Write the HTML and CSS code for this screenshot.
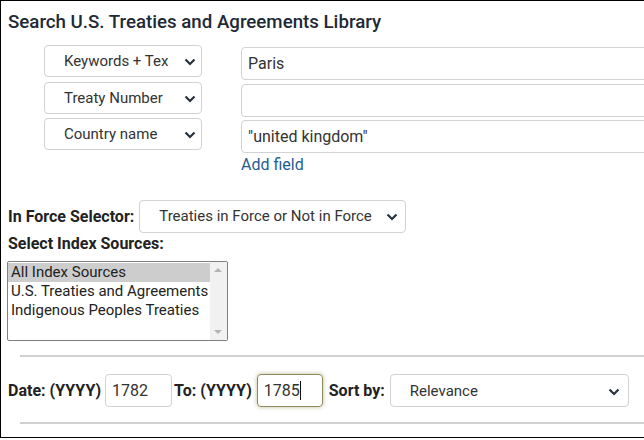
FILE: index.html
```html
<!DOCTYPE html>
<html lang="en">
<head>
    <meta charset="UTF-8">
    <meta name="viewport" content="width=device-width, initial-scale=1.0">
    <title>Search U.S. Treaties and Agreements Library</title>
    <link rel="stylesheet" href="styles.css">
</head>
<body>
    <div class="frame">
        <h1>Search U.S. Treaties and Agreements Library</h1>

        <!-- Search fields -->
        <div class="fields">
            <div class="field-row">
                <div class="select-wrap field-select">
                    <select><option>Keywords + Tex</option></select>
                    <svg class="chevron" viewBox="0 0 12 8"><path d="M1.5 1.5 L6 6 L10.5 1.5"/></svg>
                </div>
                <input class="field-input" type="text" value="Paris">
            </div>
            <div class="field-row">
                <div class="select-wrap field-select">
                    <select><option>Treaty Number</option></select>
                    <svg class="chevron" viewBox="0 0 12 8"><path d="M1.5 1.5 L6 6 L10.5 1.5"/></svg>
                </div>
                <input class="field-input" type="text" value="">
            </div>
            <div class="field-row">
                <div class="select-wrap field-select">
                    <select><option>Country name</option></select>
                    <svg class="chevron" viewBox="0 0 12 8"><path d="M1.5 1.5 L6 6 L10.5 1.5"/></svg>
                </div>
                <input class="field-input" type="text" value="&quot;united kingdom&quot;">
            </div>
            <a href="#" class="add-field">Add field</a>
        </div>

        <!-- In force -->
        <div class="force-row">
            <label class="label">In Force Selector:</label>
            <div class="select-wrap force-select">
                <select><option>Treaties in Force or Not in Force</option></select>
                <svg class="chevron" viewBox="0 0 12 8"><path d="M1.5 1.5 L6 6 L10.5 1.5"/></svg>
            </div>
        </div>

        <label class="label sources-label">Select Index Sources:</label>
        <div class="listbox">
            <ul class="options">
                <li class="selected">All Index Sources</li>
                <li>U.S. Treaties and Agreements</li>
                <li>Indigenous Peoples Treaties</li>
            </ul>
            <div class="scrollbar">
                <span class="arrow-up"></span>
                <span class="arrow-down"></span>
            </div>
        </div>

        <hr>

        <!-- Dates and sort -->
        <div class="date-row">
            <label class="label">Date: (YYYY)</label>
            <input class="year from-year" type="text" value="1782">
            <label class="label">To: (YYYY)</label>
            <div class="year to-year">1785<span class="caret"></span></div>
            <label class="label">Sort by:</label>
            <div class="select-wrap sort-select">
                <select><option>Relevance</option></select>
                <svg class="chevron" viewBox="0 0 12 8"><path d="M1.5 1.5 L6 6 L10.5 1.5"/></svg>
            </div>
        </div>

        <hr class="last">
    </div>
</body>
</html>
```

FILE: styles.css
```css
body {
    margin: 0;
    font-family: Roboto, "Liberation Sans", Arial, sans-serif;
    color: #333;
    background: white;
}

.frame {
    width: 640px;
    height: 436px;
    border: 1px solid black;
    padding: 0 0 0 7px;
    box-sizing: content-box;
    overflow: hidden;
    position: relative;
}

h1 {
    font-size: 18.7px;
    font-weight: 500;
    color: #1e2a36;
    margin: 0;
    padding: 11px 0 0 0;
    line-height: 20px;
    white-space: nowrap;
}

/* search field rows */
.fields {
    margin: 15px 0 0 36px;
}

.field-row {
    display: flex;
    align-items: flex-start;
    height: 33px;
    margin-bottom: 3.5px;
}

.select-wrap {
    position: relative;
}

.select-wrap select {
    appearance: none;
    -webkit-appearance: none;
    width: 100%;
    height: 100%;
    border: 1px solid #d2d2d2;
    border-radius: 4px;
    background: white;
    font-family: inherit;
    font-size: 15px;
    color: #333;
    padding: 0 0 0 19px;
    margin: 0;
}

.chevron {
    position: absolute;
    width: 12px;
    height: 8px;
    top: 50%;
    right: 8px;
    margin-top: -3px;
    fill: none;
    stroke: #28323c;
    stroke-width: 2.2;
    pointer-events: none;
}

.field-select {
    width: 158px;
    height: 32px;
    margin-top: -2px;
    flex: none;
}

.field-select .chevron {
    right: 6px;
}

.field-input {
    width: 420px;
    height: 33px;
    margin: 0 0 0 39px;
    flex: none;
    box-sizing: border-box;
    border: 1px solid #d2d2d2;
    border-radius: 4px;
    font-family: inherit;
    font-size: 16px;
    color: #333;
    padding: 0 6px;
}

.add-field {
    display: block;
    margin: -2px 0 0 197px;
    color: #1f5c94;
    font-size: 16px;
    line-height: 19px;
    text-decoration: none;
    width: max-content;
}

/* in force selector */
.force-row {
    display: flex;
    align-items: center;
    margin-top: 26px;
}

.label {
    font-weight: bold;
    font-size: 16px;
    color: #222;
    white-space: nowrap;
}

.force-select {
    width: 267px;
    height: 33px;
    margin-left: 5px;
}

.sources-label {
    display: block;
    margin-top: 1px;
    line-height: 19px;
}

/* list box */
.listbox {
    display: flex;
    width: 219px;
    height: 78px;
    border: 1px solid #808080;
    border-radius: 2px;
    margin: 8px 0 0 -1px;
}

.options {
    list-style: none;
    margin: 0;
    padding: 1px 0 0 0;
    flex: 1;
}

.options li {
    font-size: 15px;
    line-height: 19px;
    padding-left: 3px;
    color: #222;
    white-space: nowrap;
}

.options li.selected {
    background: #cdcdcd;
}

.scrollbar {
    width: 17px;
    background: #f1f1f1;
    position: relative;
}

.arrow-up,
.arrow-down {
    position: absolute;
    left: 4px;
    width: 0;
    height: 0;
    border-left: 4px solid transparent;
    border-right: 4px solid transparent;
}

.arrow-up {
    top: 6px;
    border-bottom: 4px solid #b4b4b4;
}

.arrow-down {
    bottom: 6px;
    border-top: 4px solid #b4b4b4;
}

hr {
    border: none;
    border-top: 2px solid #d0d0d0;
    margin: 14px 0 0 12px;
}

hr.last {
    margin-top: 14px;
}

/* date row */
.date-row {
    display: flex;
    align-items: center;
    height: 34px;
    margin-top: 17px;
}

.year {
    width: 67px;
    height: 33px;
    box-sizing: border-box;
    border: 1px solid #d2d2d2;
    border-radius: 4px;
    font-family: inherit;
    font-size: 16px;
    color: #333;
    padding: 0 6px;
    margin: 0 2px 0 4px;
    display: flex;
    align-items: center;
}

.to-year {
    width: 66px;
    margin: 0 6px 0 5px;
    border-color: #8d8a62;
    box-shadow: 0 0 4px rgba(150, 140, 70, 0.6);
}

.caret {
    display: inline-block;
    width: 1px;
    height: 19px;
    background: #111;
}

.sort-select {
    width: 239px;
    height: 33px;
    margin-left: 5px;
}

.sort-select .chevron {
    right: 9px;
}
```
